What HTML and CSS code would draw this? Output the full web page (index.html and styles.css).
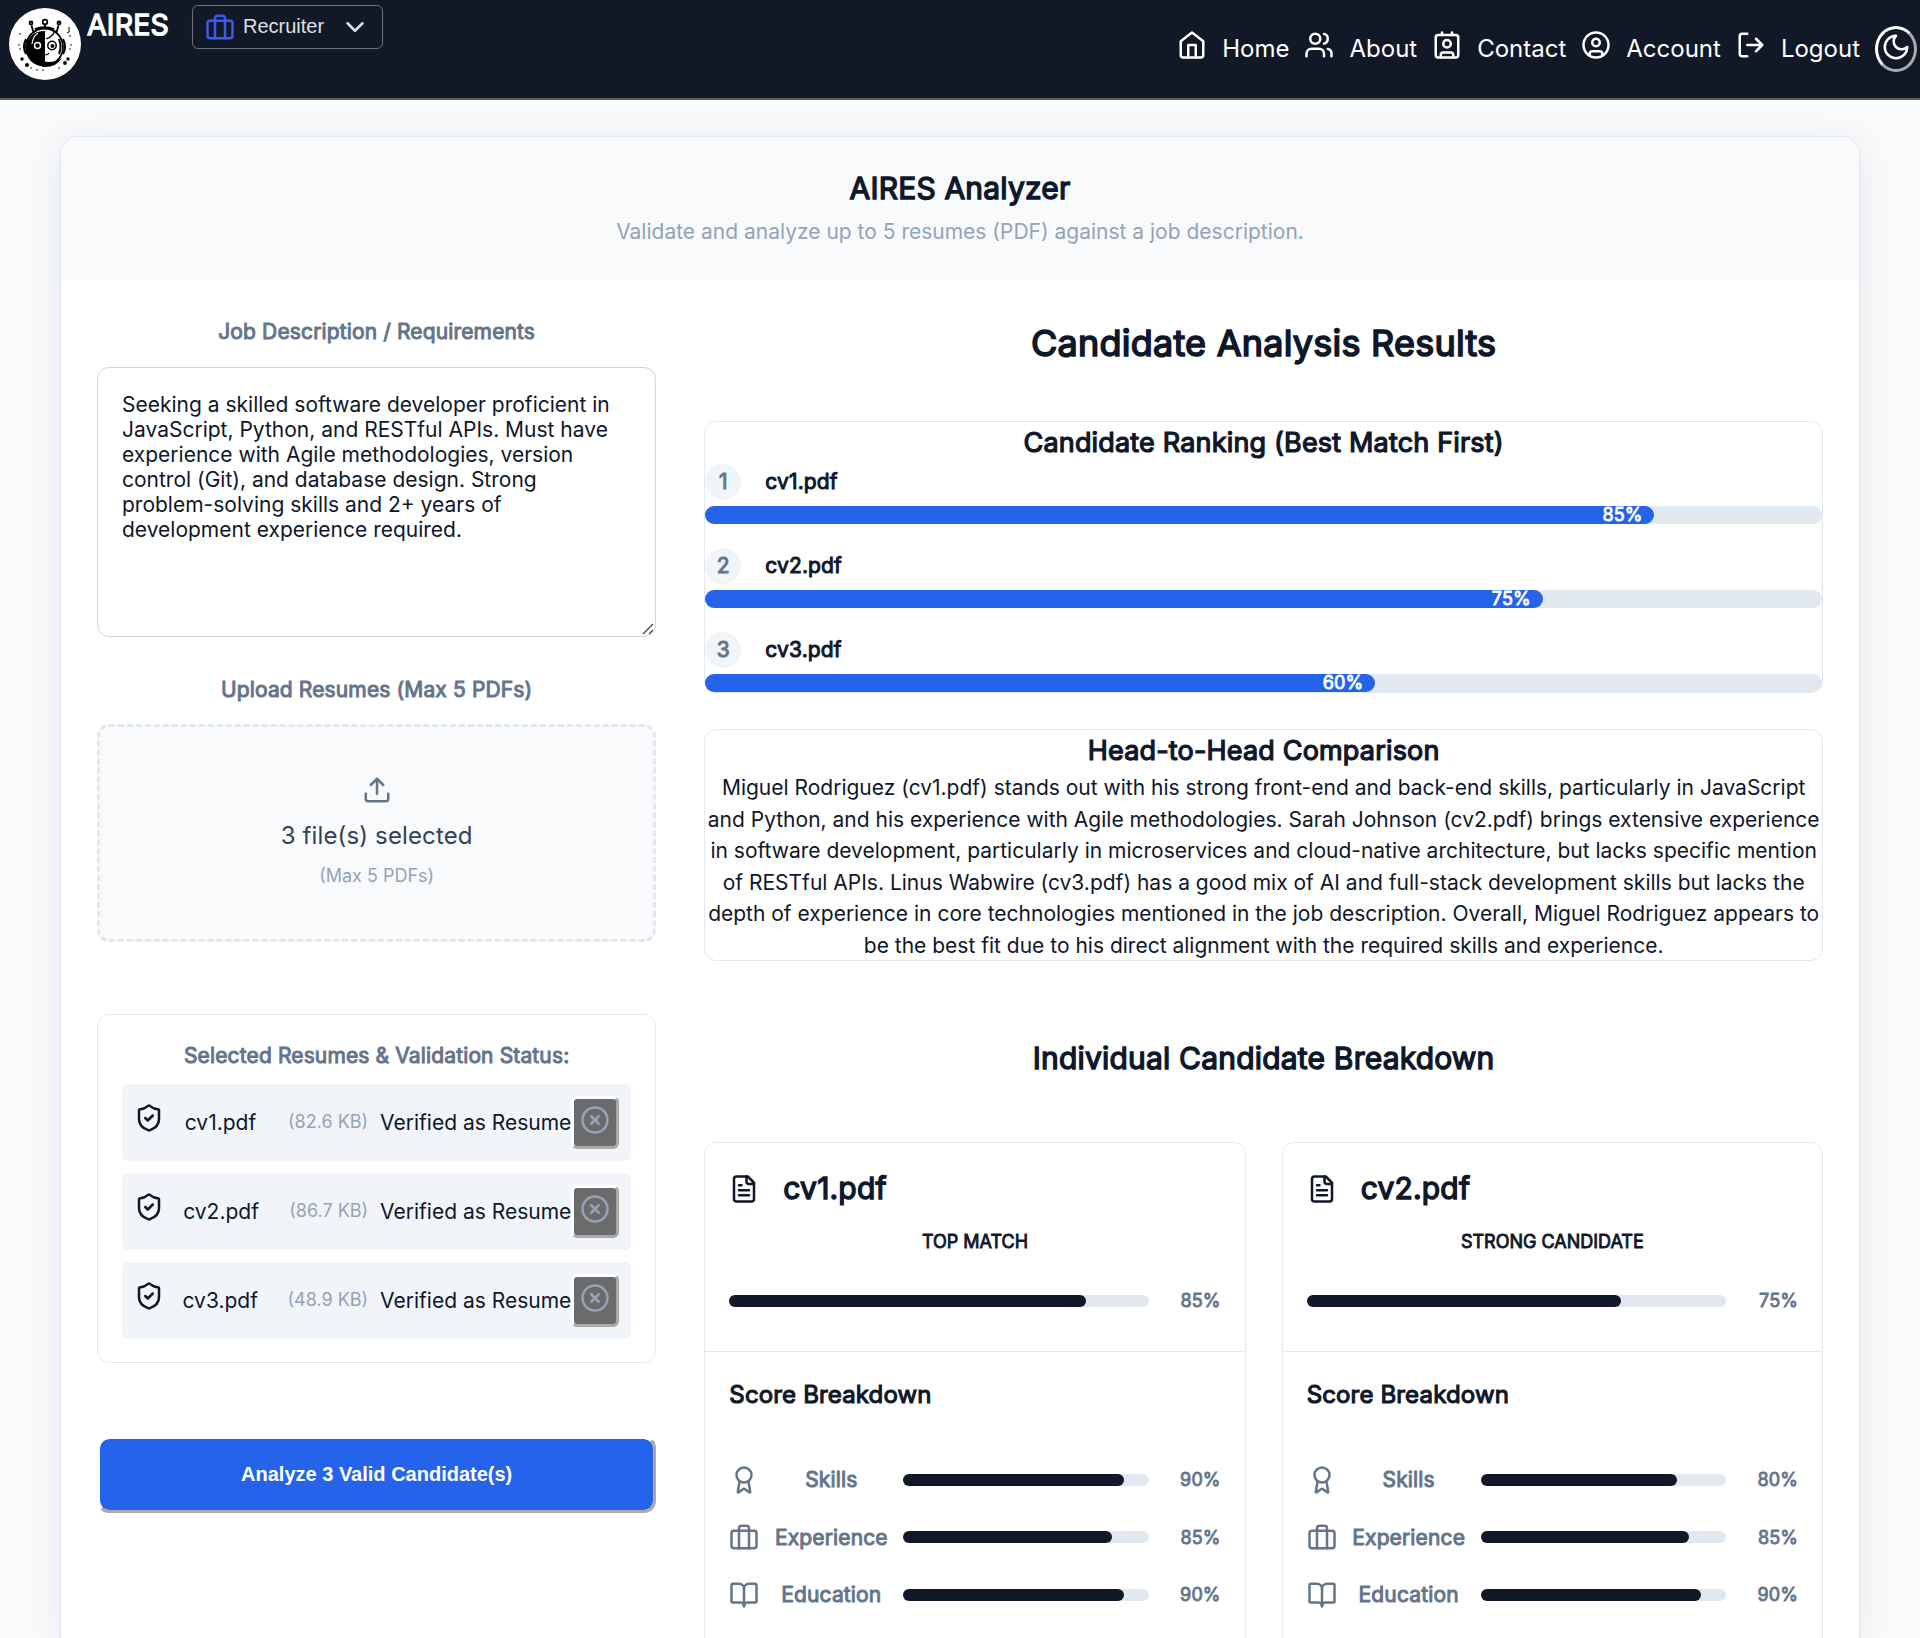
FILE: index.html
```html
<!DOCTYPE html>
<html lang="en">
<head>
<meta charset="utf-8">
<title>AIRES Analyzer</title>
<link rel="stylesheet" href="styles.css">
</head>
<body>
<svg width="0" height="0" class="sprite" aria-hidden="true">
  <symbol id="briefcase" viewBox="0 0 24 24"><rect width="20" height="14" x="2" y="7" rx="2"/><path d="M16 21V5a2 2 0 0 0-2-2h-4a2 2 0 0 0-2 2v16"/></symbol>
  <symbol id="chevron" viewBox="0 0 24 24"><path d="m6 9 6 6 6-6"/></symbol>
  <symbol id="home" viewBox="0 0 24 24"><path d="m3 9 9-7 9 7v11a2 2 0 0 1-2 2H5a2 2 0 0 1-2-2z"/><path d="M9 22V12h6v10"/></symbol>
  <symbol id="users" viewBox="0 0 24 24"><path d="M16 21v-2a4 4 0 0 0-4-4H6a4 4 0 0 0-4 4v2"/><circle cx="9" cy="7" r="4"/><path d="M22 21v-2a4 4 0 0 0-3-3.87M16 3.13a4 4 0 0 1 0 7.75"/></symbol>
  <symbol id="contact" viewBox="0 0 24 24"><path d="M16 2v2M8 2v2M7 22v-2a2 2 0 0 1 2-2h6a2 2 0 0 1 2 2v2"/><circle cx="12" cy="11" r="3"/><rect x="3" y="4" width="18" height="18" rx="2"/></symbol>
  <symbol id="account" viewBox="0 0 24 24"><circle cx="12" cy="12" r="10"/><circle cx="12" cy="10" r="3"/><path d="M7 20.662V19a2 2 0 0 1 2-2h6a2 2 0 0 1 2 2v1.662"/></symbol>
  <symbol id="logout" viewBox="0 0 24 24"><path d="M9 21H5a2 2 0 0 1-2-2V5a2 2 0 0 1 2-2h4M16 17l5-5-5-5M21 12H9"/></symbol>
  <symbol id="moon" viewBox="0 0 24 24"><path d="M12 3a6 6 0 0 0 9 9 9 9 0 1 1-9-9Z"/></symbol>
  <symbol id="upload" viewBox="0 0 24 24"><path d="M12 3v12M17 8l-5-5-5 5M21 15v4a2 2 0 0 1-2 2H5a2 2 0 0 1-2-2v-4"/></symbol>
  <symbol id="shield" viewBox="0 0 24 24"><path d="M20 13c0 5-3.5 7.5-7.66 8.95a1 1 0 0 1-.67-.01C7.5 20.5 4 18 4 13V6a1 1 0 0 1 1-1c2 0 4.5-1.2 6.24-2.72a1.17 1.17 0 0 1 1.52 0C14.51 3.81 17 5 19 5a1 1 0 0 1 1 1z"/><path d="m9 12 2 2 4-4"/></symbol>
  <symbol id="circle-x" viewBox="0 0 24 24"><circle cx="12" cy="12" r="10"/><path d="m15 9-6 6M9 9l6 6"/></symbol>
  <symbol id="file" viewBox="0 0 24 24"><path d="M15 2H6a2 2 0 0 0-2 2v16a2 2 0 0 0 2 2h12a2 2 0 0 0 2-2V7Z"/><path d="M14 2v4a2 2 0 0 0 2 2h4M10 9H8M16 13H8M16 17H8"/></symbol>
  <symbol id="award" viewBox="0 0 24 24"><path d="m15.477 12.89 1.515 8.526a.5.5 0 0 1-.81.47l-3.58-2.687a1 1 0 0 0-1.197 0l-3.586 2.686a.5.5 0 0 1-.81-.469l1.514-8.526"/><circle cx="12" cy="8" r="6"/></symbol>
  <symbol id="book" viewBox="0 0 24 24"><path d="M12 7v14"/><path d="M3 18a1 1 0 0 1-1-1V4a1 1 0 0 1 1-1h5a4 4 0 0 1 4 4 4 4 0 0 1 4-4h5a1 1 0 0 1 1 1v13a1 1 0 0 1-1 1h-6a3 3 0 0 0-3 3 3 3 0 0 0-3-3z"/></symbol>
</svg>

<header class="nav">
  <div class="brand">
    <svg class="logo" viewBox="0 0 72 72">
      <circle cx="36" cy="36" r="36" fill="#fff"/>
      <g fill="none" stroke="#000" stroke-width="1.8">
        <path d="M36 19v-3M24.500 24.500l-2-7M47.500 24.500l2-7"/>
        <circle cx="36" cy="14" r="2.300"/><circle cx="22" cy="15" r="1.500"/><circle cx="50" cy="15" r="1.500"/>
        <circle cx="35.500" cy="39" r="18.500"/>
        <path d="M26 21.500q9-4 19 0" stroke-width="2.600"/>
        <path d="M46 22q-2 7-9 9" stroke-width="1.200"/>
        <path d="M17 31q-4 8 0 15M54 31q4 8 0 15M50 31q3 8 0 15" stroke-width="2"/>
        <path d="M36 47q3 0 4-2" stroke-width="1.200"/>
      </g>
      <path d="M36 23q-16 0-19 15 0 19 19 20.500z"/>
      <path d="M33 53q11 3 20-3-6 10-20 9z"/>
      <path d="M23 36q1-8 6-11" fill="none" stroke="#fff" stroke-width="1.200"/>
      <circle cx="28.500" cy="37.500" r="3" fill="#000" stroke="#fff" stroke-width="1.500"/>
      <circle cx="43" cy="37.500" r="4.200" fill="#fff" stroke="#000" stroke-width="1.500"/><circle cx="43.500" cy="38" r="2"/>
      <g fill="#000"><circle cx="13" cy="51" r="1.700"/><circle cx="18" cy="57" r="2"/><circle cx="59" cy="51" r="1.700"/><circle cx="56" cy="55" r="1.900"/><circle cx="11" cy="26" r=".8"/><circle cx="10" cy="37" r=".8"/><circle cx="11" cy="41" r=".8"/><circle cx="62" cy="37" r=".8"/><circle cx="61" cy="28" r=".8"/><circle cx="61" cy="41" r=".8"/><circle cx="28" cy="62" r=".8"/><circle cx="34" cy="62" r=".8"/><circle cx="22" cy="60" r=".8"/><circle cx="50" cy="60" r=".8"/></g>
      <path d="M60 19v5l-2 1" fill="none" stroke="#000"/>
    </svg>
    <span class="brand-name strong">AIRES</span>
  </div>
  <button class="role" type="button">
    <svg class="icon blue"><use href="#briefcase"/></svg><span>Recruiter</span><svg class="icon chevron"><use href="#chevron"/></svg>
  </button>
  <nav class="links">
    <a><svg class="icon"><use href="#home"/></svg><span>Home</span></a>
    <a><svg class="icon"><use href="#users"/></svg><span>About</span></a>
    <a><svg class="icon"><use href="#contact"/></svg><span>Contact</span></a>
    <a><svg class="icon"><use href="#account"/></svg><span>Account</span></a>
    <a><svg class="icon"><use href="#logout"/></svg><span>Logout</span></a>
  </nav>
  <button class="theme" type="button"><svg class="icon"><use href="#moon"/></svg></button>
</header>

<main class="panel">
  <div class="panel-head">
    <h1 class="strong">AIRES Analyzer</h1>
    <p>Validate and analyze up to 5 resumes (PDF) against a job description.</p>
  </div>
  <div class="panel-body">
    <section class="form">
      <label class="label strong">Job Description / Requirements</label>
      <div class="job-wrap">
        <textarea class="job">Seeking a skilled software developer proficient in JavaScript, Python, and RESTful APIs. Must have experience with Agile methodologies, version control (Git), and database design. Strong problem-solving skills and 2+ years of development experience required.</textarea>
        <svg class="grip" viewBox="0 0 12 12"><path d="M1 11 11 1M7 11l4-4"/></svg>
      </div>
      <label class="label upload-label strong">Upload Resumes (Max 5 PDFs)</label>
      <div class="drop">
        <svg class="icon"><use href="#upload"/></svg>
        <span class="drop-main">3 file(s) selected</span>
        <span class="drop-hint">(Max 5 PDFs)</span>
      </div>
      <div class="files">
        <h2 class="strong">Selected Resumes &amp; Validation Status:</h2>
        <div class="file"><svg class="icon"><use href="#shield"/></svg><span class="file-name">cv1.pdf</span><span class="file-size">(82.6 KB)</span><span class="file-state">Verified as Resume</span><button type="button" class="remove"><svg class="icon"><use href="#circle-x"/></svg></button></div>
        <div class="file"><svg class="icon"><use href="#shield"/></svg><span class="file-name">cv2.pdf</span><span class="file-size">(86.7 KB)</span><span class="file-state">Verified as Resume</span><button type="button" class="remove"><svg class="icon"><use href="#circle-x"/></svg></button></div>
        <div class="file"><svg class="icon"><use href="#shield"/></svg><span class="file-name">cv3.pdf</span><span class="file-size">(48.9 KB)</span><span class="file-state">Verified as Resume</span><button type="button" class="remove"><svg class="icon"><use href="#circle-x"/></svg></button></div>
      </div>
      <button class="analyze" type="button">Analyze 3 Valid Candidate(s)</button>
    </section>

    <section class="results">
      <h2 class="results-title strong">Candidate Analysis Results</h2>
      <div class="box ranking">
        <h3 class="strong">Candidate Ranking (Best Match First)</h3>
        <div class="rank"><div class="rank-head"><span class="rank-no strong">1</span><span class="rank-name strong">cv1.pdf</span></div><div class="rank-bar"><div class="rank-fill strong" style="width:85%">85%</div></div></div>
        <div class="rank"><div class="rank-head"><span class="rank-no strong">2</span><span class="rank-name strong">cv2.pdf</span></div><div class="rank-bar"><div class="rank-fill strong" style="width:75%">75%</div></div></div>
        <div class="rank"><div class="rank-head"><span class="rank-no strong">3</span><span class="rank-name strong">cv3.pdf</span></div><div class="rank-bar"><div class="rank-fill strong" style="width:60%">60%</div></div></div>
      </div>
      <div class="box compare">
        <h3 class="strong">Head-to-Head Comparison</h3>
        <p>Miguel Rodriguez (cv1.pdf) stands out with his strong front-end and back-end skills, particularly in JavaScript and Python, and his experience with Agile methodologies. Sarah Johnson (cv2.pdf) brings extensive experience in software development, particularly in microservices and cloud-native architecture, but lacks specific mention of RESTful APIs. Linus Wabwire (cv3.pdf) has a good mix of AI and full-stack development skills but lacks the depth of experience in core technologies mentioned in the job description. Overall, Miguel Rodriguez appears to be the best fit due to his direct alignment with the required skills and experience.</p>
      </div>
      <h2 class="breakdown-title strong">Individual Candidate Breakdown</h2>
      <div class="cards">
        <article class="box card">
          <div class="card-head">
            <div class="card-name"><svg class="icon"><use href="#file"/></svg><span class="strong">cv1.pdf</span></div>
            <div class="verdict strong">TOP MATCH</div>
            <div class="overall"><div class="bar"><div class="fill" style="width:85%"></div></div><span class="pct strong">85%</span></div>
          </div>
          <div class="card-body">
            <h4 class="strong">Score Breakdown</h4>
            <div class="score"><svg class="icon"><use href="#award"/></svg><span class="score-label strong">Skills</span><div class="bar"><div class="fill" style="width:90%"></div></div><span class="pct strong">90%</span></div>
            <div class="score"><svg class="icon"><use href="#briefcase"/></svg><span class="score-label strong">Experience</span><div class="bar"><div class="fill" style="width:85%"></div></div><span class="pct strong">85%</span></div>
            <div class="score"><svg class="icon"><use href="#book"/></svg><span class="score-label strong">Education</span><div class="bar"><div class="fill" style="width:90%"></div></div><span class="pct strong">90%</span></div>
          </div>
        </article>
        <article class="box card">
          <div class="card-head">
            <div class="card-name"><svg class="icon"><use href="#file"/></svg><span class="strong">cv2.pdf</span></div>
            <div class="verdict strong">STRONG CANDIDATE</div>
            <div class="overall"><div class="bar"><div class="fill" style="width:75%"></div></div><span class="pct strong">75%</span></div>
          </div>
          <div class="card-body">
            <h4 class="strong">Score Breakdown</h4>
            <div class="score"><svg class="icon"><use href="#award"/></svg><span class="score-label strong">Skills</span><div class="bar"><div class="fill" style="width:80%"></div></div><span class="pct strong">80%</span></div>
            <div class="score"><svg class="icon"><use href="#briefcase"/></svg><span class="score-label strong">Experience</span><div class="bar"><div class="fill" style="width:85%"></div></div><span class="pct strong">85%</span></div>
            <div class="score"><svg class="icon"><use href="#book"/></svg><span class="score-label strong">Education</span><div class="bar"><div class="fill" style="width:90%"></div></div><span class="pct strong">90%</span></div>
          </div>
        </article>
      </div>
    </section>
  </div>
</main>
</body>
</html>
```
FILE: styles.css
```css
* { box-sizing: border-box; margin: 0; padding: 0; }
html { overflow: hidden; height: 1638px; }
body {
  display: flex;
  flex-direction: column;
  height: 1638px;
  overflow: hidden;
  background: #f8fafc;
  color: #0f172a;
  font: 400 21px/1.5 Inter, "Liberation Sans", sans-serif;
}
h1, h2, h3, h4 { font-weight: 400; }
.sprite { display: block; flex: none; }
.strong { -webkit-text-stroke: 0.046em currentColor; letter-spacing: 0.0065em; }
.icon {
  width: 30px;
  height: 30px;
  flex: none;
  fill: none;
  stroke: currentColor;
  stroke-width: 2;
  stroke-linecap: round;
  stroke-linejoin: round;
}

.nav {
  display: flex;
  flex: none;
  align-items: flex-start;
  height: 100px;
  background: #111827;
  border-bottom: 2px solid #5d5d5d;
  color: #fff;
}
.brand { display: flex; padding: 8px 0 0 9px; width: 192px; }
.logo { width: 72px; height: 72px; flex: none; }
.brand-name { margin-left: 6px; font-size: 28.5px; line-height: 33px; }
.role {
  display: flex;
  align-items: center;
  width: 191px;
  height: 44px;
  margin-top: 5px;
  padding: 0 12px;
  background: transparent;
  border: 1px solid #6f6f73;
  border-radius: 6px;
  color: #e0e0e0;
  font: 20px "Liberation Sans", Arial, sans-serif;
  box-shadow: 0 3px 6px rgba(255, 255, 255, 0.03);
}
.role span { margin: 0 auto 0 8px; padding-bottom: 2px; }
.blue { color: #3b5bf0; }
.links { display: flex; gap: 15px; margin-left: auto; padding-top: 30px; font-size: 24px; line-height: 36px; }
.links a { display: flex; gap: 15px; }
.links span { padding-top: 1px; }
.theme {
  display: flex;
  align-items: center;
  justify-content: center;
  width: 42px;
  height: 46px;
  margin: 26px 3px 0 15px;
  padding-bottom: 4px;
  border: 3px solid;
  border-color: #fff #aaa #aaa #fff;
  border-radius: 50%;
  background: transparent;
  color: #fff;
}

.panel {
  flex: 1;
  min-height: 0;
  width: 1800px;
  margin: 36px auto 0;
  background: #fff;
  border: 1px solid #e2e8f0;
  border-bottom: 0;
  border-radius: 18px 18px 0 0;
  overflow: hidden;
  box-shadow: 0 6px 36px rgba(15, 23, 42, 0.08);
}
.panel-head { height: 142px; padding-top: 29px; background: #f8fafc; border-bottom: 1px solid #f1f5f9; text-align: center; }
.panel-head h1 { font-size: 30px; line-height: 45px; }
.panel-head p { color: #94a3b8; line-height: 42px; }
.panel-body { display: grid; grid-template-columns: 1fr 2fr; gap: 48px; height: 1359px; padding: 36px 36px 0; overflow: hidden; }

.form { display: flex; flex-direction: column; min-width: 0; }
.label { height: 52px; line-height: 34px; color: #64748b; text-align: center; }
.job-wrap { position: relative; height: 270px; }
.job {
  display: block;
  width: 100%;
  height: 270px;
  padding: 24px;
  border: 1px solid #cbd5e1;
  border-radius: 12px;
  background: #fff;
  color: #0f172a;
  font: 21px/25px Inter, "Liberation Sans", sans-serif;
  resize: none;
  outline: none;
}
.grip { position: absolute; right: 2px; bottom: 2px; width: 12px; height: 12px; fill: none; stroke: #444; stroke-width: 1.3; }
.upload-label { margin-top: 36px; height: 51px; line-height: 33px; }
.drop {
  display: flex;
  flex-direction: column;
  align-items: center;
  height: 218px;
  padding-top: 48px;
  border: 3px dashed #e2e8f0;
  border-radius: 12px;
  background: #f8fafc;
  color: #64748b;
}
.drop-main { margin-top: 13px; color: #334155; font-size: 24px; line-height: 36px; letter-spacing: 0.006em; }
.drop-hint { margin-top: 8px; color: #94a3b8; font-size: 18px; line-height: 27px; }
.files {
  display: flex;
  flex-direction: column;
  gap: 12px;
  height: 349px;
  margin-top: 72px;
  padding: 24px;
  border: 1px solid #e2e8f0;
  border-radius: 12px;
}
.files h2 { height: 33px; font-size: 21px; line-height: 33px; color: #64748b; text-align: center; }
.file { display: flex; align-items: center; height: 77px; padding: 12px; background: #f1f5f9; border-radius: 6px; }
.file > .icon { margin-bottom: 10px; }
.file-name { flex: 1; text-align: center; padding-right: 11px; }
.file-size { color: #94a3b8; font-size: 18px; line-height: 25px; padding-bottom: 2px; }
.file-state { margin-left: 12px; }
.remove {
  display: flex;
  align-items: center;
  justify-content: center;
  width: 48px;
  height: 53px;
  padding-bottom: 5px;
  border: 3px solid;
  border-color: #fff #aaa #aaa #fff;
  border-radius: 6px;
  background: #6b6b6b;
  color: #94a3b8;
}
.analyze {
  height: 77px;
  margin-top: 73px;
  border: 3px solid;
  border-color: #fff #aaa #aaa #fff;
  border-radius: 12px;
  background: #2563eb;
  background-clip: padding-box;
  color: #fff;
  font: bold 20px "Liberation Sans", Arial, sans-serif;
}

.results { display: flex; flex-direction: column; min-width: 0; }
.results-title { height: 106px; font-size: 36px; line-height: 57px; text-align: center; }
.box { border: 1px solid #e2e8f0; border-radius: 12px; }
.box h3 { height: 42px; font-size: 27px; line-height: 42px; text-align: center; }
.ranking { height: 272px; display: flex; flex-direction: column; }
.rank { height: 84px; flex: none; }
.rank:last-child { height: 60px; }
.rank-head { display: flex; align-items: center; gap: 24px; height: 42px; padding-bottom: 6px; }
.rank-no { width: 36px; height: 36px; border-radius: 50%; background: #f1f5f9; color: #64748b; text-align: center; line-height: 36px; }
.rank-bar { height: 18px; border-radius: 9px; background: #e2e8f0; }
.rank-fill { height: 18px; padding-right: 12px; border-radius: 9px; background: #2563eb; color: #fff; font-size: 18px; line-height: 18px; text-align: right; }
.compare { margin-top: 36px; height: 232px; }
.compare p { line-height: 31.5px; text-align: center; }
.breakdown-title { height: 181px; padding-top: 75px; font-size: 30px; line-height: 45px; text-align: center; }
.cards { display: grid; grid-template-columns: 1fr 1fr; gap: 36px; }
.card { height: 620px; }
.card-head { height: 209px; padding: 23px 24px 24px; border-bottom: 1px solid #e2e8f0; }
.card-name { display: flex; align-items: center; gap: 24px; height: 45px; font-size: 30px; }
.verdict { margin-top: 17px; font-size: 18px; line-height: 27px; letter-spacing: 0; text-align: center; }
.overall { display: flex; align-items: center; height: 27px; margin-top: 32px; }
.bar { flex: 1; height: 12px; border-radius: 6px; background: #e2e8f0; }
.fill { height: 12px; border-radius: 6px; background: #111827; }
.pct { width: 72px; color: #64748b; font-size: 18px; line-height: 27px; text-align: right; }
.card-body { padding: 24px; }
.card-body h4 { height: 75px; font-size: 24px; line-height: 38px; }
.score { display: flex; align-items: center; height: 57.5px; color: #64748b; }
.score-label { width: 144px; text-align: center; }
```
